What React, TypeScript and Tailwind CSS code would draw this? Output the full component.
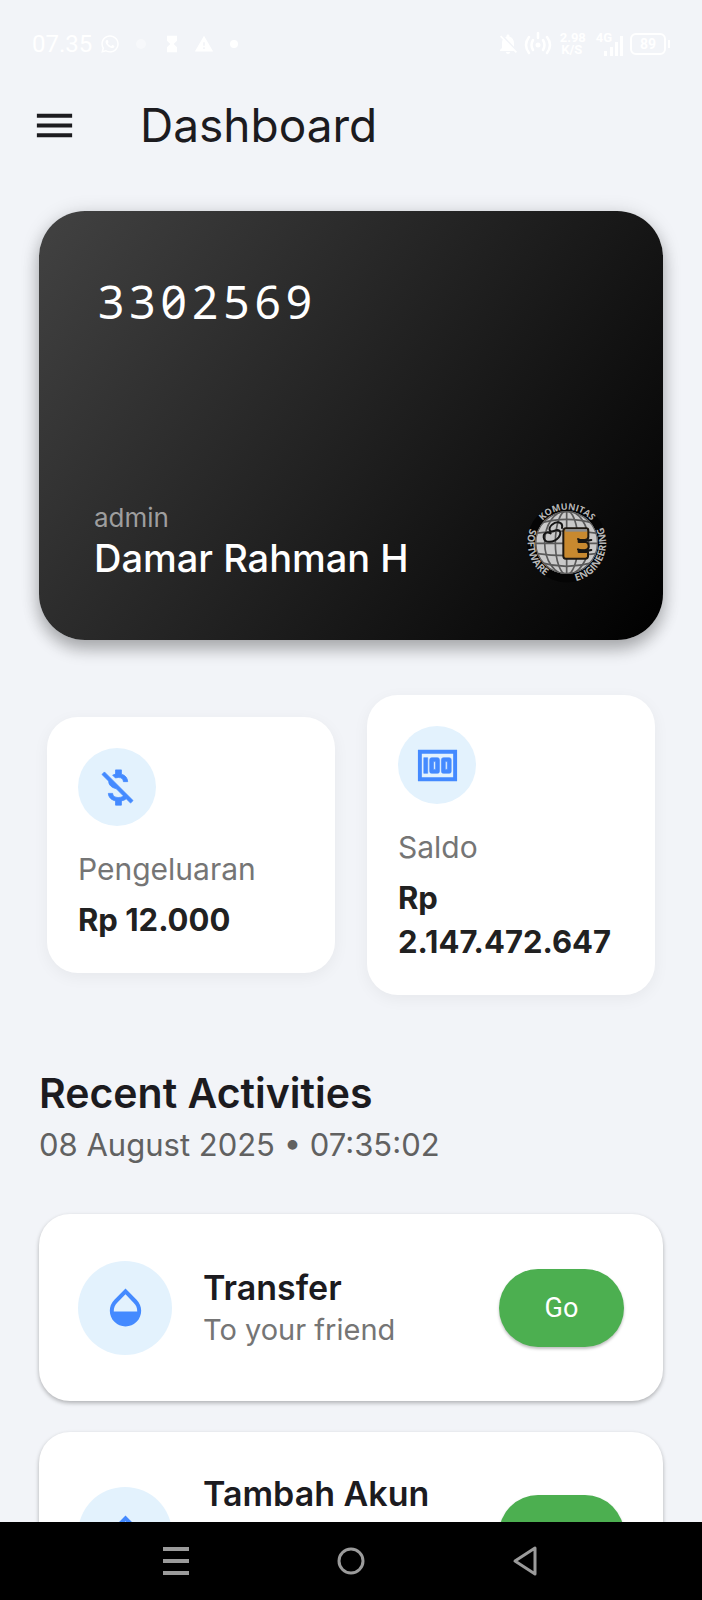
import { useState } from 'react';
import type { ReactNode } from 'react';
import { MdHourglassFull, MdMenu, MdNotificationsOff, MdOpacity, MdWarning } from 'react-icons/md';
import { FaWhatsapp } from 'react-icons/fa';

interface Activity {
  title: string;
  subtitle?: string;
}

interface StatCardProps {
  icon: ReactNode;
  label: string;
  value: string;
}

const activities: Activity[] = [
  { title: 'Transfer', subtitle: 'To your friend' },
  { title: 'Tambah Akun' },
];

function StatusBar() {
  return (
    <div className="flex h-[70px] shrink-0 items-end justify-between px-8 pb-3.5 font-[Roboto] text-white">
      <div className="flex items-center">
        <span className="text-2xl leading-6">07.35</span>
        <FaWhatsapp className="ml-2 size-5" />
        <span className="ml-4 size-2.5 rounded-full bg-white/40" />
        <MdHourglassFull className="ml-4 size-5" />
        <MdWarning className="ml-3 size-5" />
        <span className="ml-4 size-2 rounded-full bg-white" />
      </div>
      <div className="flex items-center">
        <MdNotificationsOff className="size-6" />
        <svg
          viewBox="0 0 28 24"
          className="ml-1 h-6 w-7"
          fill="none"
          stroke="currentColor"
          strokeWidth="2.5"
          strokeLinecap="round"
          aria-hidden="true"
        >
          <circle cx="14" cy="13" r="2.5" fill="currentColor" stroke="none" />
          <path d="M9 8Q6 13 9 18M19 8Q22 13 19 18M5 5Q-1 13 5 21M23 5Q29 13 23 21M14 1V6" />
        </svg>
        <div className="ml-2 w-6 text-center text-[13px] leading-3 font-bold">
          <div>2.98</div>
          <div>K/S</div>
        </div>
        <div className="ml-3 flex h-6 items-end">
          <span className="self-start text-[13px] leading-3 font-bold">4G</span>
          <svg viewBox="0 0 20 20" className="-ml-2 size-5" fill="currentColor" aria-hidden="true">
            <rect x="0" y="15" width="3" height="5" />
            <rect x="6" y="11" width="3" height="9" />
            <rect x="11" y="6" width="3" height="14" />
            <rect x="16" y="0" width="3" height="20" />
          </svg>
        </div>
        <div className="ml-1.5 flex h-[22px] w-9 items-center justify-center rounded-md border-2 border-white text-sm font-bold">
          89
        </div>
        <span className="ml-0.5 h-2 w-0.5 bg-white" />
      </div>
    </div>
  );
}

function CommunityLogo() {
  return (
    <svg
      viewBox="50 55 246 246"
      className="size-[82px] overflow-visible"
      role="img"
      aria-label="Komunitas Software Engineering"
    >
      <defs>
        <path id="ring-top" d="M 76 178 A 97 97 0 0 1 270 178" />
        <path id="ring-bottom" d="M 90 96 A 118 118 0 1 0 255 96" />
        <clipPath id="globe-clip">
          <circle cx="172" cy="180" r="94" />
        </clipPath>
      </defs>
      <circle cx="172" cy="180" r="119" fill="#050505" />
      <circle cx="172" cy="180" r="94" fill="#c9c9c9" />
      <g clipPath="url(#globe-clip)" fill="none" stroke="#5a5a5a" strokeWidth="5">
        <path d="M172 86V274" />
        <ellipse cx="172" cy="180" rx="34" ry="96" />
        <ellipse cx="172" cy="180" rx="66" ry="96" />
        <circle cx="172" cy="180" r="93" />
        <path d="M90 122Q172 98 254 122M78 152Q172 138 266 152M76 182H268M78 212Q172 226 266 212M94 240Q172 262 250 240" />
      </g>
      {/* stylised S and E */}
      <path
        d="M158 136C162 118 142 114 128 126C114 140 122 152 136 144C152 138 158 150 148 164C134 180 106 184 103 164C102 150 114 146 124 152"
        fill="none"
        stroke="#151515"
        strokeWidth="6"
        strokeLinecap="round"
      />
      <path
        d="M170 137H230Q237 137 237 144V163Q236 172 226 172H208V178H230Q238 180 238 190V194Q236 202 226 203H208V208H236V222Q235 228 228 228H169Q162 228 162 220V146Q162 137 170 137Z"
        fill="#c8892f"
        stroke="#1d1710"
        strokeWidth="6"
        strokeLinejoin="round"
      />
      <path d="M168 143H233" stroke="#8c8c8c" strokeWidth="8" />
      <path d="M206 169Q220 178 246 172M206 200Q222 208 246 202" fill="none" stroke="#151515" strokeWidth="6" strokeLinecap="round" />
      <g fill="#b8b8b8" className="font-[Open_Sans] font-bold">
        <text textAnchor="middle" className="text-[27px]">
          <textPath href="#ring-top" startOffset="50%">KOMUNITAS</textPath>
        </text>
        <text className="text-[30px]">
          <textPath href="#ring-bottom" startOffset="9%">SOFTWARE</textPath>
        </text>
        <text textAnchor="end" className="text-[30px]">
          <textPath href="#ring-bottom" startOffset="92%">ENGINEERING</textPath>
        </text>
      </g>
    </svg>
  );
}

function MoneyOffIcon() {
  return (
    <svg
      viewBox="0 0 24 24"
      className="size-[47px]"
      fill="currentColor"
      stroke="currentColor"
      strokeWidth="0.4"
      strokeLinejoin="round"
      aria-hidden="true"
    >
      <path d="M12.5 6.9c1.78 0 2.44.85 2.5 2.1h2.21c-.07-1.72-1.12-3.3-3.21-3.81V3h-3v2.16c-.53.12-1.03.3-1.48.54l1.47 1.47c.41-.17.91-.27 1.51-.27zM5.33 4.06L4.06 5.33 7.5 8.77c0 2.08 1.56 3.21 3.91 3.91l3.51 3.51c-.34.48-1.05.91-2.42.91-2.06 0-2.87-.92-2.98-2.1h-2.2c.12 2.19 1.76 3.42 3.68 3.83V21h3v-2.15c.96-.18 1.82-.55 2.45-1.12l2.22 2.22 1.27-1.27L5.33 4.06z" />
    </svg>
  );
}

function BanknoteIcon() {
  return (
    <svg viewBox="0 0 24 24" className="size-[47px]" fill="currentColor" fillRule="evenodd" aria-hidden="true">
      <path d="M2 4H22V20H2ZM4 6V18H20V6Z" />
      <path
        d="M5 8H7V16H5ZM9 8H12Q13 8 13 9V15Q13 16 12 16H9Q8 16 8 15V9Q8 8 9 8ZM10 10V14H11V10ZM15 8H18Q19 8 19 9V15Q19 16 18 16H15Q14 16 14 15V9Q14 8 15 8ZM16 10V14H17V10Z"
        stroke="currentColor"
        strokeWidth="0.3"
      />
    </svg>
  );
}

function BankCard() {
  return (
    <section className="flex h-[429px] flex-col justify-between rounded-[46px] bg-linear-125/srgb from-[#424242] to-black px-[55px] pt-[60px] pb-[56px] text-white shadow-[0_10px_16px_rgba(0,0,0,0.24),0_2px_20px_rgba(0,0,0,0.14)]">
      <p className="px-1 font-[Noto_Sans] text-[46px] leading-[60px] tracking-[5px] slashed-zero">3302569</p>
      <div className="flex items-center justify-between">
        <div className="pb-1">
          <p className="text-[26px] leading-9 text-[#9e9e9e]">admin</p>
          <p className="text-[38px] leading-[44px] font-medium">Damar Rahman H</p>
        </div>
        <CommunityLogo />
      </div>
    </section>
  );
}

function StatCard({ icon, label, value }: StatCardProps) {
  return (
    <div className="min-w-0 flex-1 rounded-[31px] bg-white p-[31px] shadow-[0_4px_16px_rgba(0,0,0,0.05)]">
      <div className="flex size-[78px] items-center justify-center rounded-full bg-[#e3f2fd] text-[#448aff]">
        {icon}
      </div>
      <p className="mt-[22px] text-[30px] leading-[42px] text-[#757575]">{label}</p>
      <p className="mt-2 text-[31px] leading-[44px] font-bold text-[#212121]">{value}</p>
    </div>
  );
}

function ActivityCard({ title, subtitle }: Activity) {
  return (
    <li className="flex min-h-[187px] items-center rounded-[31px] bg-white px-[39px] py-10 shadow-[0_2px_4px_rgba(0,0,0,0.28)]">
      <div className="flex size-[94px] shrink-0 items-center justify-center rounded-full bg-[#e3f2fd] text-[#448aff]">
        <MdOpacity className="size-[47px]" />
      </div>
      <div className="ml-[31px] flex-1">
        <h3 className="text-[34px] leading-[44px] font-semibold text-[#1c1b1f]">{title}</h3>
        {subtitle ? (
          <p className="text-[29px] leading-10 text-[#757575]">{subtitle}</p>
        ) : (
          <div className="h-20" />
        )}
      </div>
      <button
        type="button"
        className="h-[78px] w-[125px] shrink-0 rounded-full bg-[#4caf50] font-[Roboto] text-[27px] leading-6 text-white shadow-[0_2px_3px_rgba(0,0,0,0.25)]"
      >
        Go
      </button>
    </li>
  );
}

function SystemNav() {
  return (
    <nav className="flex h-[78px] shrink-0 items-center justify-center gap-[139px] bg-black text-[#9b9b9b]">
      <button type="button" aria-label="Recent apps">
        <svg viewBox="0 0 36 36" className="size-9" fill="currentColor">
          <path d="M5 4H31V8H5zM5 16H31V20H5zM5 28H31V32H5z" />
        </svg>
      </button>
      <button type="button" aria-label="Home">
        <svg viewBox="0 0 36 36" className="size-9" fill="none" stroke="currentColor" strokeWidth="3">
          <circle cx="18" cy="18" r="12" />
        </svg>
      </button>
      <button type="button" aria-label="Back">
        <svg viewBox="0 0 36 36" className="size-9" fill="none" stroke="currentColor" strokeWidth="3" strokeLinejoin="round">
          <path d="M27 5V31L7 18Z" />
        </svg>
      </button>
    </nav>
  );
}

export default function App() {
  const [menuOpen, setMenuOpen] = useState(false);

  return (
    <div className="flex h-screen flex-col bg-[#f2f4f8] font-[Inter,sans-serif] text-[#1c1b1f]">
      <StatusBar />
      <header className="flex h-[110px] shrink-0 items-center px-[31px]">
        <button type="button" aria-label="Menu" aria-expanded={menuOpen} onClick={() => setMenuOpen(!menuOpen)}>
          <MdMenu className="size-[47px]" />
        </button>
        <h1 className="ml-[62px] text-[46px] leading-[60px]">Dashboard</h1>
      </header>

      <main className="min-h-0 flex-1 overflow-hidden px-[39px] pt-[31px]">
        <BankCard />

        <div className="mt-[55px] flex items-center gap-8 px-2">
          <StatCard icon={<MoneyOffIcon />} label="Pengeluaran" value="Rp 12.000" />
          <StatCard icon={<BanknoteIcon />} label="Saldo" value="Rp 2.147.472.647" />
        </div>

        <section className="mt-[70px]">
          <h2 className="text-[41px] leading-[56px] font-semibold">Recent Activities</h2>
          <p className="text-[31px] leading-[48px] text-[#616161]">08 August 2025 • 07:35:02</p>
          <ul className="mt-[45px] flex flex-col gap-[31px]">
            {activities.map((activity) => (
              <ActivityCard key={activity.title} title={activity.title} subtitle={activity.subtitle} />
            ))}
          </ul>
        </section>
      </main>

      <SystemNav />
    </div>
  );
}
